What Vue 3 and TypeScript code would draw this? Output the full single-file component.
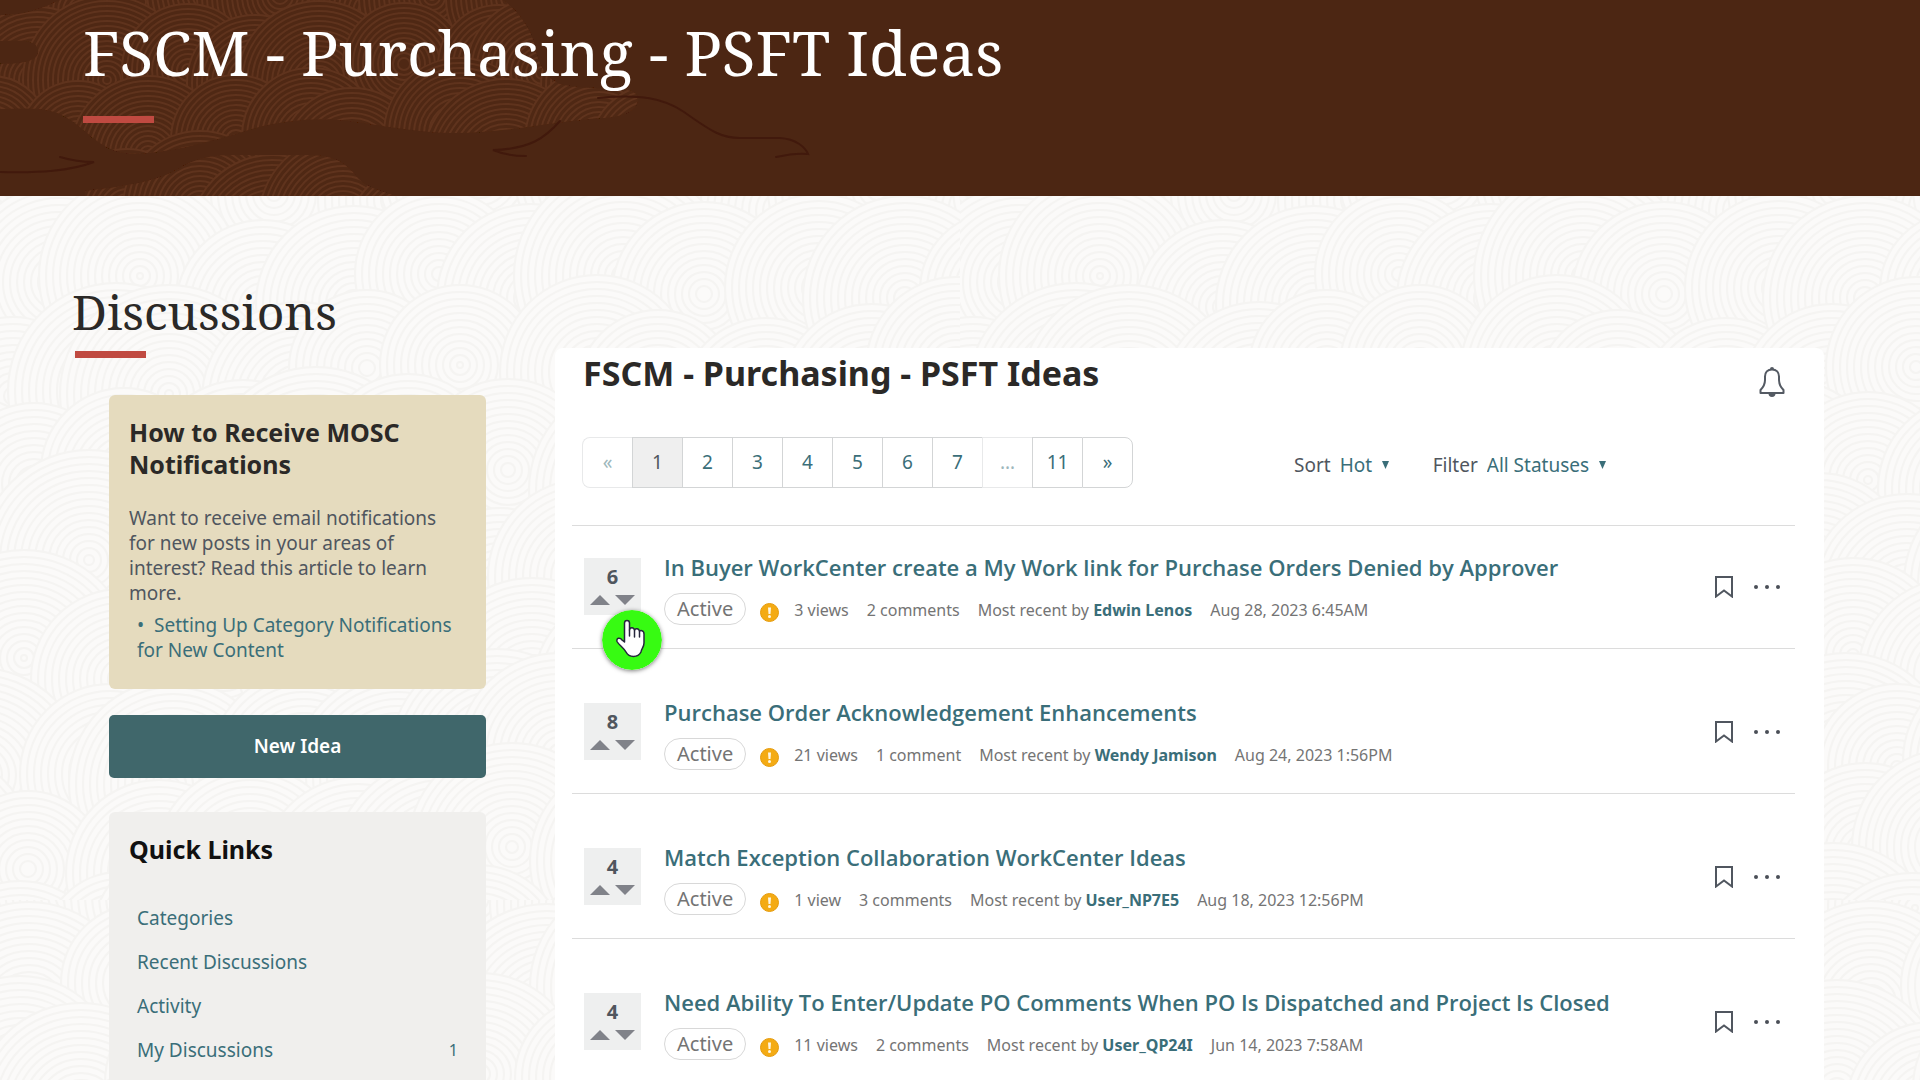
<script setup lang="ts">
interface Disc { x: number; y: number; radii: number[] }
interface Idea {
  votes: number
  title: string
  views: string
  comments: string
  user: string
  date: string
}

// Overlapping discs of concentric rings that fill one repeatable tile.
function makeDiscs(width: number, height: number, cell: number, step: number): Disc[] {
  const discs: Disc[] = []
  let seed = 7
  const rand = () => (seed = (seed * 16807) % 2147483647) / 2147483647
  for (let row = -1; row * cell <= height + cell; row++) {
    for (let col = -1; col * cell <= width + cell; col++) {
      const radius = cell * (0.8 + rand() * 0.35)
      const radii: number[] = []
      for (let r = radius; r > 2; r -= step) radii.push(Math.round(r))
      discs.push({
        x: Math.round((col + (row % 2 ? 0.5 : 0)) * cell + (rand() - 0.5) * cell * 0.5),
        y: Math.round(row * cell + (rand() - 0.5) * cell * 0.4),
        radii,
      })
    }
  }
  return discs
}

const pageDiscs = makeDiscs(960, 900, 96, 7)
const heroDiscs = makeDiscs(660, 196, 74, 5)

const pages = ['«', '1', '2', '3', '4', '5', '6', '7', '…', '11', '»']
const muted = (p: string) => p === '«' || p === '…'

const quickLinks = [
  { label: 'Categories', count: '' },
  { label: 'Recent Discussions', count: '' },
  { label: 'Activity', count: '' },
  { label: 'My Discussions', count: '1' },
]

const ideas: Idea[] = [
  { votes: 6, title: 'In Buyer WorkCenter create a My Work link for Purchase Orders Denied by Approver', views: '3 views', comments: '2 comments', user: 'Edwin Lenos', date: 'Aug 28, 2023 6:45AM' },
  { votes: 8, title: 'Purchase Order Acknowledgement Enhancements', views: '21 views', comments: '1 comment', user: 'Wendy Jamison', date: 'Aug 24, 2023 1:56PM' },
  { votes: 4, title: 'Match Exception Collaboration WorkCenter Ideas', views: '1 view', comments: '3 comments', user: 'User_NP7E5', date: 'Aug 18, 2023 12:56PM' },
  { votes: 4, title: 'Need Ability To Enter/Update PO Comments When PO Is Dispatched and Project Is Closed', views: '11 views', comments: '2 comments', user: 'User_QP24I', date: 'Jun 14, 2023 7:58AM' },
]
</script>

<template>
  <div class="page">
    <svg class="page-art" aria-hidden="true">
      <defs>
        <pattern id="page-rings" width="960" height="900" patternUnits="userSpaceOnUse">
          <g v-for="(d, i) in pageDiscs" :key="i">
            <circle v-for="(r, j) in d.radii" :key="j" :cx="d.x" :cy="d.y" :r="r" fill="#fbfaf9" stroke="#f5f4f2" stroke-width="2" />
          </g>
        </pattern>
      </defs>
      <rect width="100%" height="100%" fill="url(#page-rings)" />
    </svg>

    <header class="hero">
      <svg class="hero-art" width="820" height="196" viewBox="0 0 820 196" aria-hidden="true">
        <defs>
          <clipPath id="hero-shape">
            <path d="M60 0H503C522 14 534 34 536 52C540 66 546 78 560 84C590 92 625 84 636 94C642 106 630 117 600 118C550 122 520 130 480 132C440 136 400 128 350 121C310 116 270 122 236 134C200 144 160 156 125 153C95 148 88 128 60 114C40 106 20 109 0 109V64C20 64 40 62 38 50C36 38 20 41 0 41V15C20 16 40 10 60 0Z" />
            <path d="M85 191C130 186 160 180 180 168C200 156 215 155 240 155H310C350 156 352 176 365 184C375 190 390 194 398 196H85Z" />
          </clipPath>
        </defs>
        <g clip-path="url(#hero-shape)">
          <g v-for="(d, i) in heroDiscs" :key="i">
            <circle v-for="(r, j) in d.radii" :key="j" :cx="d.x" :cy="d.y" :r="r" fill="#4f2814" stroke="#5f331d" stroke-width="2" />
          </g>
        </g>
        <g fill="none" stroke="#41190c" stroke-width="2" stroke-linecap="round">
          <path d="M560 121C545 138 530 149 493 150C505 155 515 156 526 156" />
          <path d="M598 98C640 94 664 98 684 112C712 132 722 138 740 138H780C796 139 805 147 808 154C800 153 785 155 776 157" />
          <path d="M0 172C40 173 70 171 94 162C80 162 70 160 60 157" />
        </g>
      </svg>
      <div class="hero-text">
        <h1>FSCM - Purchasing - PSFT Ideas</h1>
        <span class="accent"></span>
      </div>
    </header>

    <main class="layout">
      <aside class="side">
        <h2 class="side-heading">Discussions</h2>
        <span class="accent side-accent"></span>

        <div class="side-cards">
          <section class="notice">
            <h3>How to Receive MOSC Notifications</h3>
            <p>Want to receive email notifications for new posts in your areas of interest? Read this article to learn more.</p>
            <a class="notice-link" href="#">•&nbsp; Setting Up Category Notifications for New Content</a>
          </section>

          <button class="new-idea" type="button">New Idea</button>

          <nav class="quick">
            <h3>Quick Links</h3>
            <a v-for="l in quickLinks" :key="l.label" href="#">
              <span>{{ l.label }}</span><small v-if="l.count">{{ l.count }}</small>
            </a>
          </nav>
        </div>
      </aside>

      <section class="panel">
        <div class="panel-head">
          <h2>FSCM - Purchasing - PSFT Ideas</h2>
          <button class="icon-button" type="button" aria-label="Notifications">
            <svg width="28" height="32" viewBox="0 0 28 32">
              <path d="M14 3.500C9.500 3.500 7 6.500 7 10.500V14C7 19 5.500 21 2.500 24V27H25.500V24C22.500 21 21 19 21 14V10.500C21 6.500 18.500 3.500 14 3.500Z" fill="none" stroke="#545a63" stroke-width="2" stroke-linejoin="round" />
              <path d="M12 3a2 2 0 0 1 4 0M10.500 27.500a3.500 3.500 0 0 0 7 0Z" fill="#545a63" />
            </svg>
          </button>
        </div>

        <div class="toolbar">
          <nav class="pager" aria-label="Pages">
            <a v-for="p in pages" :key="p" href="#" :class="{ current: p === '1', muted: muted(p) }">{{ p }}</a>
          </nav>
          <div class="filters">
            <label class="picker">Sort
              <select><option>Hot</option></select>
              <svg width="7" height="8" viewBox="0 0 7 8"><path d="M0 0H7L3.500 8Z" fill="#3a6e79" /></svg>
            </label>
            <label class="picker">Filter
              <select><option>All Statuses</option></select>
              <svg width="7" height="8" viewBox="0 0 7 8"><path d="M0 0H7L3.500 8Z" fill="#3a6e79" /></svg>
            </label>
          </div>
        </div>

        <ul class="ideas">
          <li v-for="(idea, i) in ideas" :key="idea.title" class="idea">
            <div class="votes">
              <strong>{{ idea.votes }}</strong>
              <div class="arrows">
                <button class="icon-button" type="button" aria-label="Vote up">
                  <svg width="20" height="10" viewBox="0 0 20 10"><path d="M0 10L10 0L20 10Z" fill="#808289" /></svg>
                </button>
                <button class="icon-button" type="button" aria-label="Vote down">
                  <svg width="20" height="10" viewBox="0 0 20 10"><path d="M0 0H20L10 10Z" fill="#808289" /></svg>
                </button>
              </div>
              <svg v-if="i === 0" class="pointer" width="60" height="60" viewBox="0 0 60 60" aria-hidden="true">
                <circle cx="30" cy="30" r="30" fill="#37fb12" />
                <path d="M22.500 32V13C22.500 9.500 27.500 9.500 27.500 13V20C28 17 32 17 32.500 20.500C33 18 37 18 37.500 21.500C38 20 42 20 42 24V33C42 37 39.500 38.500 39 42C36 48 27 48 24 42C22 38 17 35 15 31.500C14 28 18 27 20 30Z" fill="#fff" stroke="#26263c" stroke-width="1.500" stroke-linejoin="round" />
                <path d="M27.500 20V26M32.500 21V27M37.500 22V27" fill="none" stroke="#26263c" stroke-width="1.500" stroke-linecap="round" />
              </svg>
            </div>

            <div class="idea-body">
              <a class="idea-title" href="#">{{ idea.title }}</a>
              <div class="meta">
                <span class="status">Active</span>
                <svg class="alert" width="19" height="19" viewBox="0 0 19 19" aria-hidden="true">
                  <circle cx="9.500" cy="9.500" r="9" fill="#f4ab14" stroke="#e59b0c" />
                  <path d="M8 4.500H11L10.500 11H8.500Z" fill="#fff8e6" />
                  <circle cx="9.500" cy="13.500" r="1.500" fill="#fff8e6" />
                </svg>
                <span>{{ idea.views }}</span>
                <span>{{ idea.comments }}</span>
                <span>Most recent by <a href="#">{{ idea.user }}</a></span>
                <span>{{ idea.date }}</span>
              </div>
            </div>

            <div class="actions">
              <button class="icon-button" type="button" aria-label="Bookmark">
                <svg width="18" height="22" viewBox="0 0 18 22"><path d="M1 1H17V20.500L9 14.500L1 20.500Z" fill="none" stroke="#50565f" stroke-width="2" /></svg>
              </button>
              <button class="icon-button" type="button" aria-label="More options">
                <svg width="28" height="22" viewBox="0 0 28 22" fill="#4a4f57"><circle cx="3" cy="11" r="2" /><circle cx="14" cy="11" r="2" /><circle cx="25" cy="11" r="2" /></svg>
              </button>
            </div>
          </li>
        </ul>
      </section>
    </main>
  </div>
</template>

<style>
body { margin: 0; }
</style>

<style scoped>
* { box-sizing: border-box; }
h1, h2, h3, p, ul { margin: 0; padding: 0; }
a { color: #3a6e79; text-decoration: none; }
svg { display: block; }

.page {
  position: relative;
  min-height: 100vh;
  display: flex;
  flex-direction: column;
  overflow: hidden;
  background: #fbfaf9;
  color: #50565e;
  font-family: "Noto Sans", "Open Sans", sans-serif;
  font-size: 19px;
  line-height: 25px;
}
.page-art { position: absolute; inset: 0; width: 100%; height: 100%; }

.hero { position: relative; height: 196px; background: #4c2613; overflow: hidden; }
.hero-art { position: absolute; top: 0; left: 0; }
.hero-text { position: relative; padding: 12px 83px 0; }
.hero h1 {
  color: #fff;
  font: 400 62px/80px "Noto Serif", "DejaVu Serif Condensed", serif;
  margin-bottom: 24px;
}
.accent { display: block; width: 71px; height: 7px; background: #c04a41; }

.layout {
  position: relative;
  flex: 1;
  display: grid;
  grid-template-columns: 414px 1fr;
  gap: 69px;
  padding: 0 96px 0 72px;
}
.side { display: flex; flex-direction: column; padding-top: 84px; }
.side-heading { color: #2b2927; font: 400 48px/64px "Noto Serif", "DejaVu Serif Condensed", serif; }
.side-accent { margin: 7px 0 37px 3px; }
.side-cards { flex: 1; display: flex; flex-direction: column; margin-left: 37px; }
.side-cards h3 { font-size: 25px; line-height: 32px; font-weight: 700; color: #2b2927; }

.notice { padding: 21px 20px 26px; background: #e5dbbe; border-radius: 6px; }
.notice p { margin: 26px 0 7px; padding-right: 12px; }
.notice-link { display: block; padding-left: 8px; }

.new-idea {
  height: 63px;
  margin: 26px 0 34px;
  border: 0;
  border-radius: 5px;
  background: #40676b;
  color: #fff;
  font: 600 19px/25px "Noto Sans", "Open Sans", sans-serif;
}

.quick { flex: 1; padding: 21px 20px 0; background: #f0efed; border-radius: 6px 6px 0 0; }
.quick h3 { margin-bottom: 31px; color: #111; }
.quick a { display: flex; justify-content: space-between; padding: 0 8px; line-height: 44px; }
.quick small { font-size: 16px; }

.panel { margin-top: 152px; padding: 5px 29px 0 17px; background: #fff; border-radius: 8px 8px 0 0; }
.panel-head { display: flex; justify-content: space-between; align-items: flex-start; padding: 0 9px 0 11px; }
.panel-head h2 { color: #2b2927; font-size: 34px; line-height: 40px; font-weight: 700; }
.panel-head .icon-button { padding-top: 13px; }
.icon-button { padding: 0; border: 0; background: none; }

.toolbar { display: flex; align-items: center; margin: 39px 0 37px; padding-left: 10px; gap: 161px; }
.pager { display: flex; }
.pager a {
  width: 50px;
  height: 51px;
  border: solid #d3d5d6;
  border-width: 1px 0 1px 1px;
  line-height: 49px;
  text-align: center;
}
.pager a:first-child { border-radius: 8px 0 0 8px; }
.pager a:last-child { width: 51px; border-right-width: 1px; border-radius: 0 8px 8px 0; }
.pager .current { background: #efefef; color: #50565e; }
.pager .muted { border-color: #e8e9ea; color: #9db7bc; }

.filters { display: flex; gap: 44px; padding-top: 5px; }
.picker { display: flex; align-items: center; gap: 9px; }
.picker select {
  appearance: none;
  padding: 0;
  border: 0;
  background: none;
  color: #3a6e79;
  font: inherit;
}

.ideas { list-style: none; border-top: 1px solid #dcdcdc; }
.idea { display: flex; padding: 54px 14px 23px 12px; border-bottom: 1px solid #dcdcdc; }
.idea:first-child { padding-top: 32px; }

.votes { position: relative; width: 57px; height: 57px; padding-top: 6px; background: #eeefef; text-align: center; }
.votes strong { display: block; font-size: 20px; line-height: 26px; }
.arrows { display: flex; justify-content: center; gap: 5px; margin-top: 5px; }
.pointer {
  position: absolute;
  top: 52px;
  left: 18px;
  border-radius: 50%;
  box-shadow: 0 1px 4px rgba(0, 0, 0, 0.5);
  z-index: 1;
}

.idea-body { flex: 1; min-width: 0; margin-left: 23px; }
.idea-title { display: block; font: 600 22px/18px "Open Sans", "Noto Sans", sans-serif; }
.meta { display: flex; align-items: baseline; gap: 18px; margin-top: 17px; color: #747474; font-size: 16px; }
.meta a { font-weight: 700; }
.status {
  height: 32px;
  padding: 0 12px;
  border: 1px solid #d8d8d8;
  border-radius: 16px;
  font-size: 20px;
  line-height: 30px;
}
.alert { align-self: flex-end; margin: 0 -3px 3px -4px; }

.actions { display: flex; align-items: flex-start; gap: 20px; padding-top: 18px; }
</style>
